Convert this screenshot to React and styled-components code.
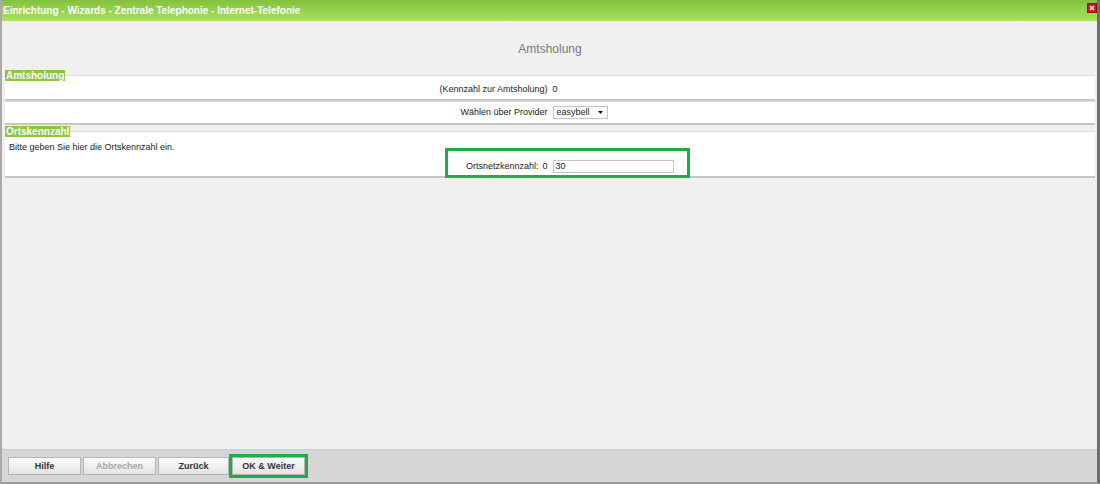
import React from 'react';
import styled, { createGlobalStyle } from 'styled-components';

const GlobalStyle = createGlobalStyle`
  html, body {
    margin: 0;
    padding: 0;
    background: #f0f0f0;
  }
  body {
    font-family: 'Liberation Sans', Arial, sans-serif;
  }
`;

const Window = styled.div`
  width: 1100px;
  height: 484px;
  box-sizing: border-box;
  display: flex;
  flex-direction: column;
  background: #f0f0f0;
  border-left: 2px solid #a9a9a9;
  border-right: 3px solid #6e6e6e;
  border-bottom: 2px solid #9a9a9a;
`;

const TitleBar = styled.div`
  height: 21px;
  flex: 0 0 21px;
  display: flex;
  align-items: flex-start;
  justify-content: space-between;
  background: linear-gradient(#84c13f, #a8e25a);
`;

const TitleText = styled.div`
  color: #fff;
  font-size: 10px;
  font-weight: bold;
  line-height: 21px;
  padding-left: 1px;
`;

const CloseButton = styled.div`
  width: 10px;
  height: 10px;
  margin: 3px 0 0 0;
  display: flex;
`;

const Body = styled.div`
  flex: 1;
  display: flex;
  flex-direction: column;
  padding: 0 2px 0 3px;
`;

const Heading = styled.div`
  text-align: center;
  font-size: 12px;
  line-height: 14px;
  color: #7a7a7a;
  margin: 21px 0 14px;
`;

const SectionTitle = styled.div`
  align-self: flex-start;
  position: relative;
  z-index: 1;
  background: #8cc63e;
  color: #fff;
  font-size: 10px;
  font-weight: bold;
  line-height: 11px;
  padding: 0 1px;
  margin-top: ${p => p.$top || 0}px;
  margin-bottom: -6px;
`;

const Panel = styled.div`
  position: relative;
  background: #fff;
  border-top: 1px solid #dedede;
  border-bottom: 2px solid #c6c6c6;
  padding: ${p => p.$pad || '0'};
`;

const Row = styled.div`
  display: grid;
  grid-template-columns: 1fr 1fr;
  column-gap: 5px;
  align-items: center;
  font-size: 9px;
  line-height: 11px;
  color: #222;
  padding: ${p => p.$pad || '4px 0'};
`;

const Label = styled.div`
  text-align: right;
  display: flex;
  justify-content: flex-end;
  gap: 4px;
`;

const Value = styled.div`
  display: flex;
  align-items: center;
`;

const Hint = styled.div`
  font-size: 9px;
  line-height: 11px;
  color: #222;
  padding-left: 4px;
`;

const Select = styled.div`
  width: 55px;
  height: 13px;
  box-sizing: border-box;
  border: 1px solid #c2c2c2;
  background: #fff;
  display: flex;
  align-items: center;
  justify-content: space-between;
  padding: 0 4px 0 3px;
  font-size: 9px;
`;

const Input = styled.div`
  width: 121px;
  height: 13px;
  box-sizing: border-box;
  border: 1px solid #c4c4c4;
  background: #fff;
  padding-left: 2px;
  font-size: 9px;
  line-height: 11px;
`;

const Highlight = styled.div`
  position: absolute;
  left: calc(50% - 105px);
  top: 16px;
  width: 245px;
  height: 30px;
  box-sizing: border-box;
  border: 3px solid #20ab49;
  pointer-events: none;
`;

const Spacer = styled.div`
  flex: 1;
`;

const Footer = styled.div`
  flex: 0 0 33px;
  box-sizing: border-box;
  background: #d6d6d6;
  border-top: 1px solid #cfcfcf;
  display: flex;
  align-items: flex-start;
  gap: 2px;
  padding: 7px 0 0 6px;
`;

const Button = styled.div`
  width: ${p => p.$w || 73}px;
  height: 18px;
  box-sizing: border-box;
  border: 1px solid #b4b4b4;
  background: linear-gradient(#fbfbfb, #e3e3e3);
  display: flex;
  align-items: center;
  justify-content: center;
  font-size: 9px;
  font-weight: bold;
  color: ${p => (p.$disabled ? '#a8a8a8' : '#333')};
  outline: ${p => (p.$active ? '3px solid #20ab49' : 'none')};
  margin-left: ${p => (p.$active ? 1 : 0)}px;
`;

export default function App() {
  return (
    <>
      <GlobalStyle />
      <Window>
        <TitleBar>
          <TitleText>Einrichtung - Wizards - Zentrale Telephonie - Internet-Telefonie</TitleText>
          <CloseButton>
            <svg width="10" height="10" viewBox="0 0 10 10">
              <rect x="0.5" y="0.5" width="9" height="9" fill="#d7141a" stroke="#8e0b0e" />
              <path d="M3 3 L7 7 M7 3 L3 7" stroke="#fff" strokeWidth="1.4" />
            </svg>
          </CloseButton>
        </TitleBar>
        <Body>
          <Heading>Amtsholung</Heading>

          <SectionTitle>Amtsholung</SectionTitle>
          <Panel>
            <Row $pad="8px 0 4px">
              <Label>(Kennzahl zur Amtsholung)</Label>
              <Value>0</Value>
            </Row>
          </Panel>
          <Panel>
            <Row $pad="4px 0">
              <Label>Wählen über Provider</Label>
              <Value>
                <Select>
                  <span>easybell</span>
                  <svg width="5" height="3" viewBox="0 0 5 3">
                    <path d="M0 0 H5 L2.5 3 Z" fill="#111" />
                  </svg>
                </Select>
              </Value>
            </Row>
          </Panel>

          <SectionTitle $top={1}>Ortskennzahl</SectionTitle>
          <Panel $pad="10px 0 3px">
            <Hint>Bitte geben Sie hier die Ortskennzahl ein.</Hint>
            <Row $pad="7px 0 0">
              <Label>
                <span>Ortsnetzkennzahl:</span>
                <span>0</span>
              </Label>
              <Value>
                <Input>30</Input>
              </Value>
            </Row>
            <Highlight />
          </Panel>
          <Spacer />
        </Body>
        <Footer>
          <Button>Hilfe</Button>
          <Button $disabled>Abbrechen</Button>
          <Button $w={71}>Zurück</Button>
          <Button $active>OK &amp; Weiter</Button>
        </Footer>
      </Window>
    </>
  );
}
